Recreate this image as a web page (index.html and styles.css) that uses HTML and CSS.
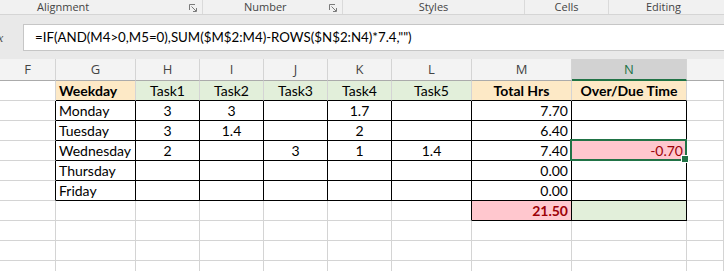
FILE: index.html
```html
<!DOCTYPE html>
<html lang="en">
<head>
  <meta charset="UTF-8">
  <title>Timesheet - Excel</title>
  <link rel="stylesheet" href="styles.css">
</head>
<body>
  <!-- ribbon group captions -->
  <div class="ribbon">
    <div class="group g-align">
      <span>Alignment</span>
      <svg class="launcher" width="8" height="8" viewBox="0 0 8 8"><path d="M0.5 6V0.5H6M2.5 2.5L7 7M7.5 4V7.5H4" fill="none" stroke="#7a7a7a" stroke-width="1"/></svg>
    </div>
    <div class="group g-number">
      <span>Number</span>
      <svg class="launcher" width="8" height="8" viewBox="0 0 8 8"><path d="M0.5 6V0.5H6M2.5 2.5L7 7M7.5 4V7.5H4" fill="none" stroke="#7a7a7a" stroke-width="1"/></svg>
    </div>
    <div class="group g-styles"><span>Styles</span></div>
    <div class="group g-cells"><span>Cells</span></div>
    <div class="group g-editing"><span>Editing</span></div>
  </div>

  <!-- formula bar -->
  <div class="formula-bar">
    <div class="fx">fx</div>
    <div class="formula">=IF(AND(M4&gt;0,M5=0),SUM($M$2:M4)-ROWS($N$2:N4)*7.4,"")</div>
  </div>

  <!-- sheet grid, columns F..O -->
  <div class="sheet">
    <div class="col-head">F</div>
    <div class="col-head">G</div>
    <div class="col-head">H</div>
    <div class="col-head">I</div>
    <div class="col-head">J</div>
    <div class="col-head">K</div>
    <div class="col-head">L</div>
    <div class="col-head">M</div>
    <div class="col-head active">N</div>
    <div class="col-head last"></div>

    <!-- row 2 -->
    <div class="c"></div>
    <div class="c hd peach bold">Weekday</div>
    <div class="c hd green mid">Task1</div>
    <div class="c hd green mid">Task2</div>
    <div class="c hd green mid">Task3</div>
    <div class="c hd green mid">Task4</div>
    <div class="c hd green mid">Task5</div>
    <div class="c hd peach bold mid">Total Hrs</div>
    <div class="c hd peach bold mid">Over/Due Time</div>
    <div class="c"></div>

    <!-- row 3 -->
    <div class="c edge"></div>
    <div class="c t">Monday</div>
    <div class="c t mid">3</div>
    <div class="c t mid">3</div>
    <div class="c t mid"></div>
    <div class="c t mid">1.7</div>
    <div class="c t mid"></div>
    <div class="c t num">7.70</div>
    <div class="c t num"></div>
    <div class="c"></div>

    <!-- row 4 -->
    <div class="c edge"></div>
    <div class="c t">Tuesday</div>
    <div class="c t mid">3</div>
    <div class="c t mid">1.4</div>
    <div class="c t mid"></div>
    <div class="c t mid">2</div>
    <div class="c t mid"></div>
    <div class="c t num">6.40</div>
    <div class="c t num"></div>
    <div class="c"></div>

    <!-- row 5 -->
    <div class="c edge"></div>
    <div class="c t">Wednesday</div>
    <div class="c t mid">2</div>
    <div class="c t mid"></div>
    <div class="c t mid">3</div>
    <div class="c t mid">1</div>
    <div class="c t mid">1.4</div>
    <div class="c t num">7.40</div>
    <div class="c t num bad selected">-0.70<span class="sel"></span></div>
    <div class="c"></div>

    <!-- row 6 -->
    <div class="c edge"></div>
    <div class="c t">Thursday</div>
    <div class="c t mid"></div>
    <div class="c t mid"></div>
    <div class="c t mid"></div>
    <div class="c t mid"></div>
    <div class="c t mid"></div>
    <div class="c t num">0.00</div>
    <div class="c t num"></div>
    <div class="c"></div>

    <!-- row 7 -->
    <div class="c edge"></div>
    <div class="c t">Friday</div>
    <div class="c t mid"></div>
    <div class="c t mid"></div>
    <div class="c t mid"></div>
    <div class="c t mid"></div>
    <div class="c t mid"></div>
    <div class="c t num">0.00</div>
    <div class="c t num"></div>
    <div class="c"></div>

    <!-- row 8: totals -->
    <div class="c"></div>
    <div class="c"></div>
    <div class="c"></div>
    <div class="c"></div>
    <div class="c"></div>
    <div class="c"></div>
    <div class="c edge"></div>
    <div class="c t num bad bold">21.50</div>
    <div class="c t green"></div>
    <div class="c"></div>

    <!-- rows 9-11 -->
    <div class="c"></div><div class="c"></div><div class="c"></div><div class="c"></div><div class="c"></div>
    <div class="c"></div><div class="c"></div><div class="c"></div><div class="c"></div><div class="c"></div>
    <div class="c"></div><div class="c"></div><div class="c"></div><div class="c"></div><div class="c"></div>
    <div class="c"></div><div class="c"></div><div class="c"></div><div class="c"></div><div class="c"></div>
    <div class="c"></div><div class="c"></div><div class="c"></div><div class="c"></div><div class="c"></div>
    <div class="c"></div><div class="c"></div><div class="c"></div><div class="c"></div><div class="c"></div>
  </div>
</body>
</html>
```

FILE: styles.css
```css
* { box-sizing: border-box; }
body { margin: 0; background: #fff; overflow: hidden; font-family: Lato, "Liberation Sans", sans-serif; }

/* ribbon captions */
.ribbon { display: flex; height: 15px; background: #f1f1f1; border-bottom: 1px solid #d5d5d5; font: 11px/14px "Open Sans", "Noto Sans", sans-serif; color: #444; white-space: nowrap; }
.group { display: flex; align-items: center; border-right: 1px solid #dadada; height: 14px; }
.g-align { width: 203px; padding: 0 5px 0 37px; justify-content: space-between; }
.g-number { width: 140px; padding: 0 5px 0 41px; justify-content: space-between; }
.g-styles { width: 182px; justify-content: center; }
.g-cells { width: 84px; justify-content: center; }
.g-editing { flex: 1; padding-left: 37px; border-right: none; }
.launcher { display: block; margin-top: 2px; }

/* formula bar */
.formula-bar { display: flex; height: 44px; padding: 9px 0 8px; background: #e9e9e9; }
.fx { width: 29px; margin-left: -6px; font: italic 13px/27px "Liberation Serif", serif; color: #555; }
.formula { flex: 1; height: 27px; background: #fff; border: 1px solid #c6c6c6; border-right: none; padding-left: 11px; font-size: 13.3px; line-height: 25px; color: #000; white-space: nowrap; overflow: hidden; }

/* grid */
.sheet { display: grid; grid-template-columns: 56px 80px 64px 64px 64px 64px 80px 100px 115px 1fr; grid-template-rows: 22px; grid-auto-rows: 20px; }
.col-head { background: #f3f3f3; border-right: 1px solid #d4d4d4; border-bottom: 1px solid #ababab; text-align: center; font: 13px/21px "Open Sans", "Noto Sans", sans-serif; color: #444; }
.col-head.active { background: #d2d2d2; color: #217346; border-bottom: 2px solid #217346; }
.col-head.last { border-right: none; }

.c { border-right: 1px solid #d4d4d4; border-bottom: 1px solid #d4d4d4; padding: 0 3px; font-size: 14px; line-height: 19px; color: #000; white-space: nowrap; overflow: hidden; }
.hd { border-bottom-color: #000; }
.t { border-right-color: #000; border-bottom-color: #000; }
.edge { border-right-color: #000; }
.mid { text-align: center; }
.num { text-align: right; }
.bold { font-weight: bold; }

.peach { background: #fde9c6; }
.green { background: #e2efda; }
.bad { background: #ffc7ce; color: #9c0006; }

/* active cell frame + fill handle */
.selected { position: relative; overflow: visible; }
.sel { position: absolute; left: -2px; top: -2px; right: -1px; bottom: -1px; border: 2px solid #217346; }
.sel::after { content: ""; position: absolute; right: -4px; bottom: -4px; width: 6px; height: 6px; background: #217346; border: 1px solid #fff; }
```
